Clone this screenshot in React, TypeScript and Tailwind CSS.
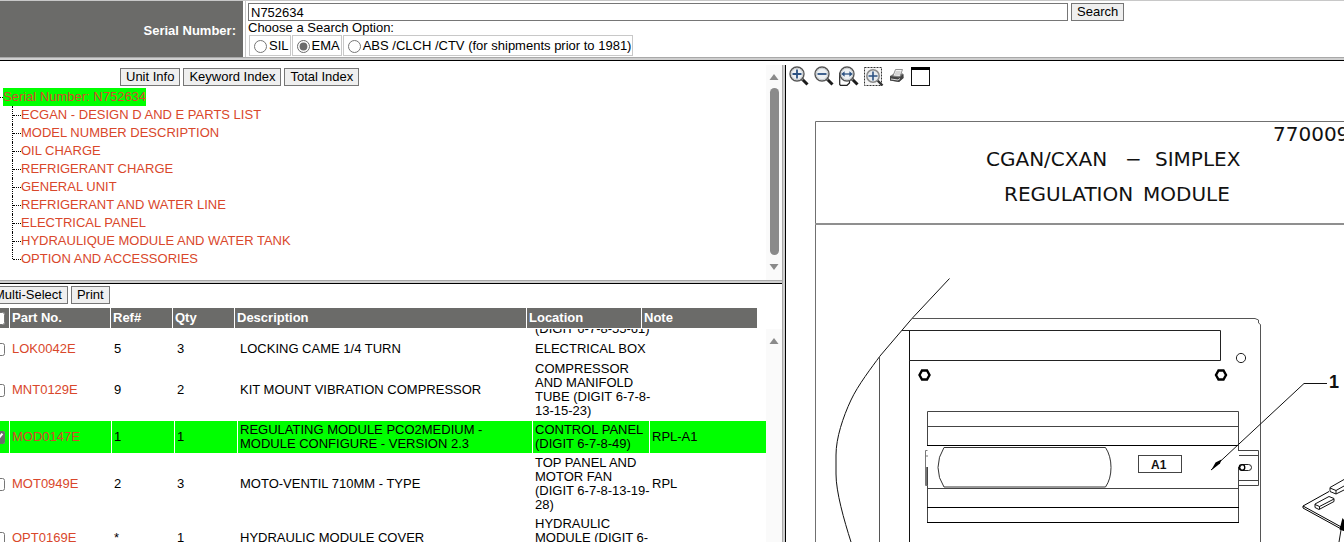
import { useState } from 'react'
import type { ReactNode } from 'react'

type Part = {
  id: string
  ref: string
  qty: string
  description: string
  location: string
  note: string
}

const sections = [
  'ECGAN - DESIGN D AND E PARTS LIST',
  'MODEL NUMBER DESCRIPTION',
  'OIL CHARGE',
  'REFRIGERANT CHARGE',
  'GENERAL UNIT',
  'REFRIGERANT AND WATER LINE',
  'ELECTRICAL PANEL',
  'HYDRAULIQUE MODULE AND WATER TANK',
  'OPTION AND ACCESSORIES',
]

const searchOptions = [
  { id: 'sil', label: 'SIL' },
  { id: 'ema', label: 'EMA' },
  { id: 'abs', label: 'ABS /CLCH /CTV (for shipments prior to 1981)' },
]

const parts: Part[] = [
  { id: 'LOK0042E', ref: '5', qty: '3', description: 'LOCKING CAME 1/4 TURN', location: 'ELECTRICAL BOX', note: '' },
  { id: 'MNT0129E', ref: '9', qty: '2', description: 'KIT MOUNT VIBRATION COMPRESSOR', location: 'COMPRESSOR\nAND MANIFOLD\nTUBE (DIGIT 6-7-8-\n13-15-23)', note: '' },
  { id: 'MOD0147E', ref: '1', qty: '1', description: 'REGULATING MODULE PCO2MEDIUM -\nMODULE CONFIGURE - VERSION 2.3', location: 'CONTROL PANEL\n(DIGIT 6-7-8-49)', note: 'RPL-A1' },
  { id: 'MOT0949E', ref: '2', qty: '3', description: 'MOTO-VENTIL 710MM - TYPE', location: 'TOP PANEL AND\nMOTOR FAN\n(DIGIT 6-7-8-13-19-\n28)', note: 'RPL' },
  { id: 'OPT0169E', ref: '*', qty: '1', description: 'HYDRAULIC MODULE COVER', location: 'HYDRAULIC\nMODULE (DIGIT 6-\n7-8-51)', note: '' },
]

function PlainButton({ children }: { children: ReactNode }) {
  return (
    <button
      type="button"
      className="h-[18px] shrink-0 whitespace-nowrap border border-[#767676] bg-[#efefef] px-[5px] leading-4 text-black"
    >
      {children}
    </button>
  )
}

function ScrollBar({ thumb }: { thumb?: boolean }) {
  return (
    <div aria-hidden="true" className="flex w-4 shrink-0 flex-col items-center bg-[#fafafa] py-[9px]">
      <svg width="10" height="6" viewBox="0 0 10 6">
        <path d="M5 0 L9.5 6 H0.5 Z" fill="#8a8a8a" />
      </svg>
      {thumb && (
        <>
          <div className="mt-2 h-[167px] w-[9px] rounded-full bg-[#8a8a8a]" />
          <svg className="mt-[9px]" width="10" height="6" viewBox="0 0 10 6">
            <path d="M0.5 0 H9.5 L5 6 Z" fill="#8a8a8a" />
          </svg>
        </>
      )}
    </div>
  )
}

function SearchHeader() {
  const [option, setOption] = useState('ema')

  return (
    <header className="flex h-[57px] shrink-0 border-t border-[#c8c8c8]">
      <label
        htmlFor="serial"
        className="flex w-[243px] shrink-0 items-center justify-end bg-[#6b6b69] pr-[7px] pt-1 font-bold text-white"
      >
        Serial Number:
      </label>
      <div className="ml-[2px] min-w-0 flex-1 border-l border-[#c8c8c8] pl-[2px] pt-[2px]">
        <div className="flex gap-[3px]">
          <input
            id="serial"
            defaultValue="N752634"
            className="h-[18px] w-[820px] min-w-0 border border-[#767676] bg-white px-[2px] leading-4"
          />
          <PlainButton>Search</PlainButton>
        </div>
        <fieldset>
          <legend className="leading-[14px]">Choose a Search Option:</legend>
          <div className="flex gap-px pl-px">
            {searchOptions.map(({ id, label }) => (
              <label
                key={id}
                className="flex h-[21px] items-center gap-[2px] border border-[#c8c8c8] pl-[4px] pr-px pt-px whitespace-nowrap"
              >
                <input
                  type="radio"
                  name="option"
                  checked={option === id}
                  onChange={() => setOption(id)}
                  className="size-[13px] accent-[#6b6b6b]"
                />
                {label}
              </label>
            ))}
          </div>
        </fieldset>
      </div>
    </header>
  )
}

function UnitTree() {
  return (
    <nav className="min-w-0 flex-1">
      <div className="flex gap-[3px] pl-[120px] pt-[3px]">
        <PlainButton>Unit Info</PlainButton>
        <PlainButton>Keyword Index</PlainButton>
        <PlainButton>Total Index</PlainButton>
      </div>
      <div className="mt-[2px] flex h-[18px] items-center">
        <span className="w-[3px] border-t border-dotted border-black" />
        <a href="#unit" className="bg-[#00ff00] leading-[18px] text-[#d9472b]">
          Serial Number: N752634
        </a>
      </div>
      <ul>
        {sections.map((name, i) => (
          <li key={name} className="flex h-[18px] items-center pl-3">
            <span
              className={
                i === sections.length - 1
                  ? 'h-[9px] self-start border-l border-dotted border-black'
                  : 'h-[18px] border-l border-dotted border-black'
              }
            />
            <span className="w-2 border-t border-dotted border-black" />
            <a href="#section" className="whitespace-nowrap leading-[18px] text-[#d9472b]">
              {name}
            </a>
          </li>
        ))}
      </ul>
    </nav>
  )
}

function PartsHeader() {
  const cell = 'bg-[#6b6b69] px-[2px] py-0 text-left font-bold'
  return (
    <table className="-ml-[14px] w-[calc(100%-10px)] table-fixed border-separate border-spacing-x-px border-spacing-y-0 text-white">
      <thead>
        <tr className="h-5">
          <th className="w-[22px] bg-[#6b6b69] p-0 pr-1">
            <input type="checkbox" aria-label="Select all parts" className="ml-auto block size-[13px] accent-[#6b6b6b]" />
          </th>
          <th className={`${cell} w-[100px]`}>Part No.</th>
          <th className={`${cell} w-[61px]`}>Ref#</th>
          <th className={`${cell} w-[61px]`}>Qty</th>
          <th className={cell}>Description</th>
          <th className={`${cell} w-[114px]`}>Location</th>
          <th className={`${cell} w-[115px]`}>Note</th>
        </tr>
      </thead>
    </table>
  )
}

function PartsTable() {
  const [selected, setSelected] = useState<string[]>(['MOD0147E'])

  const toggle = (id: string) =>
    setSelected(selected.includes(id) ? selected.filter(s => s !== id) : [...selected, id])

  return (
    <table className="-ml-[14px] -mt-[10px] w-[calc(100%+15px)] table-fixed border-separate border-spacing-px leading-[14px] [&_td]:p-[2px]">
      <colgroup>
        <col className="w-[22px]" />
        <col className="w-[101px]" />
        <col className="w-[62px]" />
        <col className="w-[62px]" />
        <col />
        <col className="w-[116px]" />
        <col className="w-[116px]" />
      </colgroup>
      <tbody>
        <tr>
          <td colSpan={5} />
          <td className="whitespace-nowrap">(DIGIT 6-7-8-55-61)</td>
          <td />
        </tr>
        {parts.map(part => (
          <tr key={part.id} className={selected.includes(part.id) ? 'h-5 [&>td]:bg-[#00ff00]' : 'h-5'}>
            <td>
              <input
                type="checkbox"
                aria-label={part.id}
                checked={selected.includes(part.id)}
                onChange={() => toggle(part.id)}
                className="ml-auto mr-[2px] block size-[13px] accent-[#6b6b6b]"
              />
            </td>
            <td>
              <a href="#part" className="text-[#d9472b]">{part.id}</a>
            </td>
            <td>{part.ref}</td>
            <td>{part.qty}</td>
            <td className="whitespace-pre-line">{part.description}</td>
            <td className="whitespace-pre">{part.location}</td>
            <td>{part.note}</td>
          </tr>
        ))}
      </tbody>
    </table>
  )
}

function Lens({ children }: { children: ReactNode }) {
  return (
    <>
      <path d="M13 13 L18.5 18.5" stroke="#1c1c1c" strokeWidth="3" />
      <path d="M12.5 12.5 L14 14" stroke="#9a9a9a" strokeWidth="1.5" />
      <circle cx="8" cy="8" r="7" fill="#eef1f3" stroke="#555" strokeWidth="1.4" />
      <circle cx="8" cy="8" r="5.7" fill="none" stroke="#c9cdd0" />
      {children}
    </>
  )
}

function ToolButton({ label, width = 20, children }: { label: string; width?: number; children: ReactNode }) {
  return (
    <button type="button" aria-label={label} className="shrink-0">
      <svg width={width} height="20" viewBox={`0 0 ${width} 20`} className="block" fill="none">
        {children}
      </svg>
    </button>
  )
}

function DrawingToolbar() {
  return (
    <div className="flex gap-[5px] pb-[6px] pl-[3px] pt-[5px]">
      <ToolButton label="Zoom in">
        <Lens>
          <path d="M8 3.5 V12.5 M3.5 8 H12.5" stroke="#2c5283" strokeWidth="1.8" />
        </Lens>
      </ToolButton>
      <ToolButton label="Zoom out">
        <Lens>
          <path d="M3.5 8 H12.5" stroke="#2c5283" strokeWidth="1.8" />
        </Lens>
      </ToolButton>
      <ToolButton label="Fit width">
        <path d="M0.7 7 L2 6 V8 M0.7 7 V18.4 L1.5 19.3 H8 L10.5 17 V12" fill="#fff" stroke="#222" strokeWidth="1.2" />
        <Lens>
          <path d="M4 8 H12" stroke="#2c5283" strokeWidth="1.3" />
          <path d="M2.3 8 L5.6 5.3 V10.7 Z M13.7 8 L10.4 5.3 V10.7 Z" fill="#2c5283" />
        </Lens>
      </ToolButton>
      <ToolButton label="Zoom window">
        <rect x="0.5" y="1.5" width="17" height="18" fill="#f6f6f6" stroke="#333" strokeDasharray="2 1" />
        <path d="M13.5 14.5 L18.5 19.5" stroke="#333" strokeWidth="2.4" />
        <circle cx="9" cy="10" r="6.2" fill="#e7ebee" stroke="#8a8a8a" strokeWidth="1.5" />
        <path d="M9 5.5 V14.5 M4.5 10 H13.5" stroke="#2c5283" strokeWidth="1.6" />
      </ToolButton>
      <ToolButton label="Print" width={17}>
        <path d="M1 10 L5 7.5 L14 7.5 L14.5 12 L10 16 L1 14.5 Z" fill="#777" />
        <path d="M1 10 L10 11.5 L14.5 8 V12 L10 16 L1 14.5 Z" fill="#444" />
        <path d="M4 10 L6.5 3.5 H13.5 L11 10.5 Z" fill="#f4f4f4" stroke="#777" strokeWidth="0.8" />
        <path d="M6.5 6 H11.5 M6 8 H11" stroke="#aaa" strokeWidth="0.8" />
        <path d="M2 13 L9 14 L11 12.5" stroke="#ddd" />
      </ToolButton>
      <ToolButton label="Full window">
        <rect x="0.5" y="1.5" width="18" height="18" fill="#fff" stroke="#111" />
        <rect x="0" y="1" width="19" height="3" fill="#000" />
      </ToolButton>
    </div>
  )
}

function ModuleDrawing() {
  return (
    <svg
      role="img"
      aria-label="Regulation module drawing"
      className="block shrink-0"
      width="558"
      height="450"
      viewBox="786 92 558 450"
      fill="none"
      stroke="#222"
    >
      {/* sheet frame */}
      <path d="M1344 121.5 H815.5 V542" stroke="#707070" />
      <path d="M815 224 H1344" stroke="#8f8f8f" strokeWidth="2" />
      <g fontFamily="'DejaVu Sans', sans-serif" fontSize="20" fill="#111" stroke="none">
        <text x="1273" y="141">770009</text>
        <text x="986" y="166">CGAN/CXAN</text>
        <text x="1125" y="166">−</text>
        <text x="1155" y="166">SIMPLEX</text>
        <text x="1004" y="201">REGULATION</text>
        <text x="1143" y="201">MODULE</text>
      </g>
      <g fontFamily="'Liberation Sans', Arial, sans-serif" fontWeight="bold" fill="#111" stroke="none">
        <text x="1151" y="469" fontSize="12">A1</text>
        <text x="1329" y="388" fontSize="18">1</text>
      </g>

      {/* cabinet */}
      <path d="M949.5 278.5 L912 318.5 L880 356 C872 367 858 385 851 400 C843 417 836 438 836 455 V474 C836 492 844 520 851 542" stroke="#111" />
      <path d="M879.5 356 V542" stroke="#555" />
      <path d="M909.5 330 V542" stroke="#111" />
      <path d="M912 318.5 H1255 L1258.5 320 V323 L1260.5 324.5 V542" stroke="#555" />
      <path d="M902 330.5 H1220.5 V360.5 H909" />
      <path d="M922 370.5 H927 L929.5 375 L927 379.5 H922 L919.5 375 Z M1218.5 370.5 H1223.5 L1226 375 L1223.5 379.5 H1218.5 L1216 375 Z" stroke="#000" strokeWidth="2.4" />
      <circle cx="1241" cy="358" r="4.6" />

      {/* rails */}
      <path d="M927.5 445.5 V411.5 H1238.5 V445.5 M927.5 426.5 H1238.5 M927.5 467 V522.5 H1238.5 V467 M927.5 488.5 H1238.5" stroke="#444" />
      <path d="M927 445.5 H1239 M927 507.5 H1239 M927 522.5 H1239" stroke="#000" />
      <path d="M927.5 450.5 H925.5 V485.5 H927.5 M925.5 456 H928 M926.5 467 V485" stroke="#777" />
      <path d="M1239 450.5 H1258.5 V485.5 H1239 M1239 455.5 H1258 M1239 480.5 H1258 M1238.5 445 V451" stroke="#444" />
      <rect x="1240" y="464.5" width="11.5" height="6" rx="3" />
      <circle cx="1242" cy="467.5" r="2.8" stroke="#000" strokeWidth="1.3" />

      {/* module */}
      <path d="M944 447.5 H1105.5 Q1111 456 1111 467.5 Q1111 479 1105.5 487 H944 Q938 478 938 467.5 Q938 457 944 447.5 Z" stroke="#333" />
      <rect x="1138.5" y="455.5" width="43" height="17" stroke="#444" />
      <path d="M1327 383.5 H1304 L1211 470" stroke="#111" />
      <path d="M1211 470.5 L1215.5 462.5 L1221.5 459.5 L1220 463.5 Z" fill="#000" stroke="none" />

      {/* circuit board */}
      <path d="M1303 506 L1329 491.5 M1303 506 V508 L1344 530.5 M1303 506 L1344 528.5" stroke="#000" />
      <path d="M1315 504 L1329 496.5 L1334 498.5 V501.5 L1319 509.5 L1315 507.5 Z M1315 504.5 L1319.5 506.5 L1334 499 M1319.5 506.5 V509" stroke="#111" />
      <path d="M1344 479.5 L1330 487.5 V491.5 L1336 494 L1344 490 M1330 488 L1336 490.5 L1344 486 M1336 490.5 V494" stroke="#111" />
      <path d="M1339 542 L1342 524" stroke="#111" />
      <path d="M1342.5 518 L1339.5 529.5 L1344 531 V520 Z" fill="#000" stroke="none" />
    </svg>
  )
}

export default function App() {
  return (
    <div className="flex h-screen flex-col overflow-hidden bg-white font-['Liberation_Sans',Arial,sans-serif] text-[13px] leading-4 text-black">
      <SearchHeader />
      <div className="h-1 shrink-0 border-b border-t border-b-black border-t-[#a9a9a9] bg-[#cfcfcf]" />

      <div className="flex min-h-0 flex-1">
        <div className="mt-1 flex w-[calc(50%+114px)] shrink-0 border-r border-black">
          <div className="flex min-w-0 flex-1 flex-col">
            <section className="flex h-[215px] shrink-0">
              <UnitTree />
              <ScrollBar thumb />
            </section>
            <div className="h-1 shrink-0 border-b border-t border-b-black border-t-[#a9a9a9] bg-[#cfcfcf]" />
            <section className="flex min-h-0 flex-1 flex-col overflow-hidden">
              <div className="-ml-[12px] flex gap-[3px] pb-1 pt-[2px]">
                <PlainButton>Multi-Select</PlainButton>
                <PlainButton>Print</PlainButton>
              </div>
              <PartsHeader />
              <div className="mt-px flex min-h-0 flex-1">
                <div className="min-w-0 flex-1 overflow-hidden">
                  <PartsTable />
                </div>
                <ScrollBar />
              </div>
            </section>
          </div>
          <div className="w-[3px] shrink-0 border-l border-[#a9a9a9] bg-[#cfcfcf]" />
        </div>

        <main className="min-w-0 flex-1 overflow-hidden">
          <DrawingToolbar />
          <ModuleDrawing />
        </main>
      </div>
    </div>
  )
}
